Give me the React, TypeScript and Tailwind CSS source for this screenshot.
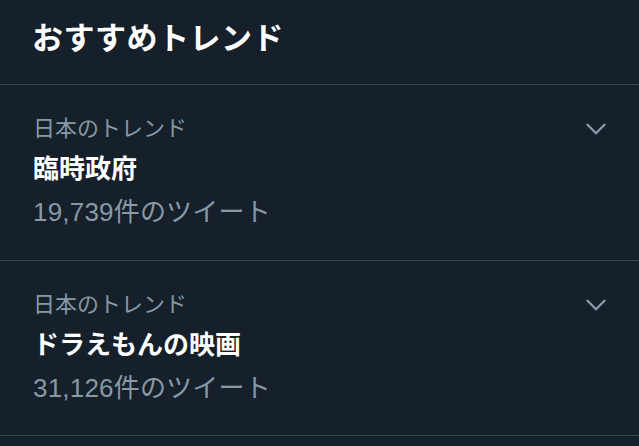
import { ChevronDown } from 'lucide-react';

const TRENDS = [
  { label: '日本のトレンド', name: '臨時政府', count: '19,739件のツイート' },
  { label: '日本のトレンド', name: 'ドラえもんの映画', count: '31,126件のツイート' },
];

const FONT = "font-['Liberation_Sans','Noto_Sans_CJK_JP',sans-serif]";

export default function App() {
  return (
    <div className={`w-[639px] h-[446px] overflow-hidden bg-[#15202b] ${FONT}`}>
      <div className="h-[85px] border-b border-[#38444d] px-[32px] pt-[19px]">
        <h2 className="text-[31px] leading-[40px] font-bold text-white tracking-[0.5px]">おすすめトレンド</h2>
      </div>

      {TRENDS.map((t, i) => (
        <div key={i} className="h-[175.5px] border-b border-[#38444d] pl-[33px] pr-[26px] pt-[29px] flex">
          <div className="flex-1">
            <p className="text-[22px] leading-[30px] text-[#8899a6]">{t.label}</p>
            <p className="text-[26px] leading-[40px] font-bold text-white mt-[5px]">{t.name}</p>
            <p className="text-[26px] leading-[40px] text-[#8899a6] mt-[3px] tracking-[0.2px]">{t.count}</p>
          </div>
          <div className="-mt-[2px]">
            <ChevronDown size={34} strokeWidth={1.7} className="text-[#8899a6]" />
          </div>
        </div>
      ))}
    </div>
  );
}
